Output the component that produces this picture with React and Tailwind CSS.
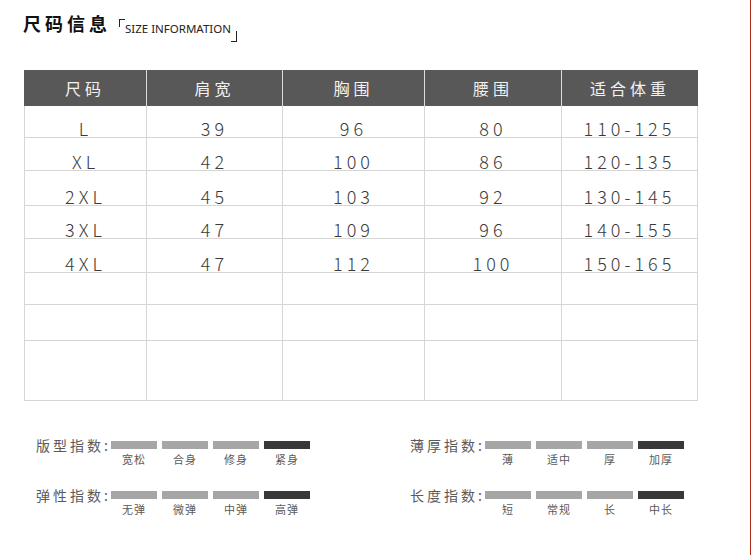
import React from 'react';

const cols = [123, 136, 142, 137, 136];
const headers = ['尺码', '肩宽', '胸围', '腰围', '适合体重'];

const rows = [
    { h: 32, cells: ['L', '39', '96', '80', '110-125'] },
    { h: 33, cells: ['XL', '42', '100', '86', '120-135'] },
    { h: 35, cells: ['2XL', '45', '103', '92', '130-145'] },
    { h: 33, cells: ['3XL', '47', '109', '96', '140-155'] },
    { h: 34, cells: ['4XL', '47', '112', '100', '150-165'] },
    { h: 32, cells: ['', '', '', '', ''] },
    { h: 36, cells: ['', '', '', '', ''] },
    { h: 60, cells: ['', '', '', '', ''] },
];

const rowHeight = {
    32: 'h-[32px]',
    33: 'h-[33px]',
    34: 'h-[34px]',
    35: 'h-[35px]',
    36: 'h-[36px]',
    60: 'h-[60px]',
};

const colWidth = {
    123: 'w-[123px]',
    136: 'w-[136px]',
    137: 'w-[137px]',
    142: 'w-[142px]',
};

const indexes = [
    {
        label: '版型指数:',
        options: ['宽松', '合身', '修身', '紧身'],
    },
    {
        label: '弹性指数:',
        options: ['无弹', '微弹', '中弹', '高弹'],
    },
];

const indexesRight = [
    {
        label: '薄厚指数:',
        options: ['薄', '适中', '厚', '加厚'],
    },
    {
        label: '长度指数:',
        options: ['短', '常规', '长', '中长'],
    },
];

function IndexRow({ label, options }) {
    return (
        <div className="flex items-start">
            <div className="w-[75px] text-[14px] leading-none tracking-[3px] text-[#5a5a5a] whitespace-nowrap">
                {label}
            </div>
            <div className="flex gap-[5px]">
                {options.map((opt, i) => (
                    <div key={opt} className="flex w-[46px] flex-col items-center">
                        <div
                            className={`mt-[3px] h-[8px] w-[46px] ${
                                i === 3 ? 'bg-[#383838]' : 'bg-[#a6a6a6]'
                            }`}
                        />
                        <div className="mt-[5px] text-[11px] leading-none tracking-[1px] text-[#5a5a5a]">
                            {opt}
                        </div>
                    </div>
                ))}
            </div>
        </div>
    );
}

function App() {
    return (
        <div
            className="flex h-[555px] w-[751px] flex-col overflow-hidden border-r border-[#b02a1a] bg-white"
            style={{ fontFamily: '"Noto Sans CJK SC", "Noto Sans", sans-serif' }}
        >
            {/* Title */}
            <div className="flex items-start pl-[23px] pt-[14px]">
                <h1 className="text-[18px] font-bold leading-none tracking-[4px] text-[#111]">
                    尺码信息
                </h1>
                <div className="relative ml-[8px] mt-[5px] h-[23px] w-[118px] pl-[6px] pt-[4px]">
                    <span className="absolute left-0 top-0 h-[8px] w-[6px] border-l border-t border-[#222]" />
                    <span
                        className="block text-[11.5px] leading-none text-[#222] whitespace-nowrap"
                        style={{ fontFamily: '"Noto Sans", sans-serif' }}
                    >
                        SIZE INFORMATION
                    </span>
                    <span className="absolute bottom-0 right-0 h-[11px] w-[6px] border-b border-r border-[#222]" />
                </div>
            </div>

            {/* Size table */}
            <div className="ml-[24px] mt-[28px] w-[674px]">
                <div className="flex h-[36px] bg-[#585858]">
                    {headers.map((h, i) => (
                        <div
                            key={h}
                            className={`flex ${colWidth[cols[i]]} items-center justify-center text-[16px] leading-none tracking-[4px] text-[#f2f2f2] ${
                                i < 4 ? 'border-r border-[#dcdcdc]' : ''
                            }`}
                        >
                            {h}
                        </div>
                    ))}
                </div>
                {rows.map((row, r) => (
                    <div key={r} className={`flex ${rowHeight[row.h]}`}>
                        {row.cells.map((c, i) => (
                            <div
                                key={i}
                                className={`flex ${colWidth[cols[i]]} items-end justify-center border-b border-r border-[#d6d6d6] text-[18px] font-light leading-none tracking-[4px] text-[#3a3a3a] ${
                                    i === 0 ? 'border-l' : ''
                                }`}
                            >
                                {c}
                            </div>
                        ))}
                    </div>
                ))}
            </div>

            {/* Index bars */}
            <div className="mt-[37px] flex pl-[36px]">
                <div className="flex flex-col gap-[23px]">
                    {indexes.map((it) => (
                        <IndexRow key={it.label} label={it.label} options={it.options} />
                    ))}
                </div>
                <div className="ml-[100px] flex flex-col gap-[23px]">
                    {indexesRight.map((it) => (
                        <IndexRow key={it.label} label={it.label} options={it.options} />
                    ))}
                </div>
            </div>
        </div>
    );
}

export default App;
